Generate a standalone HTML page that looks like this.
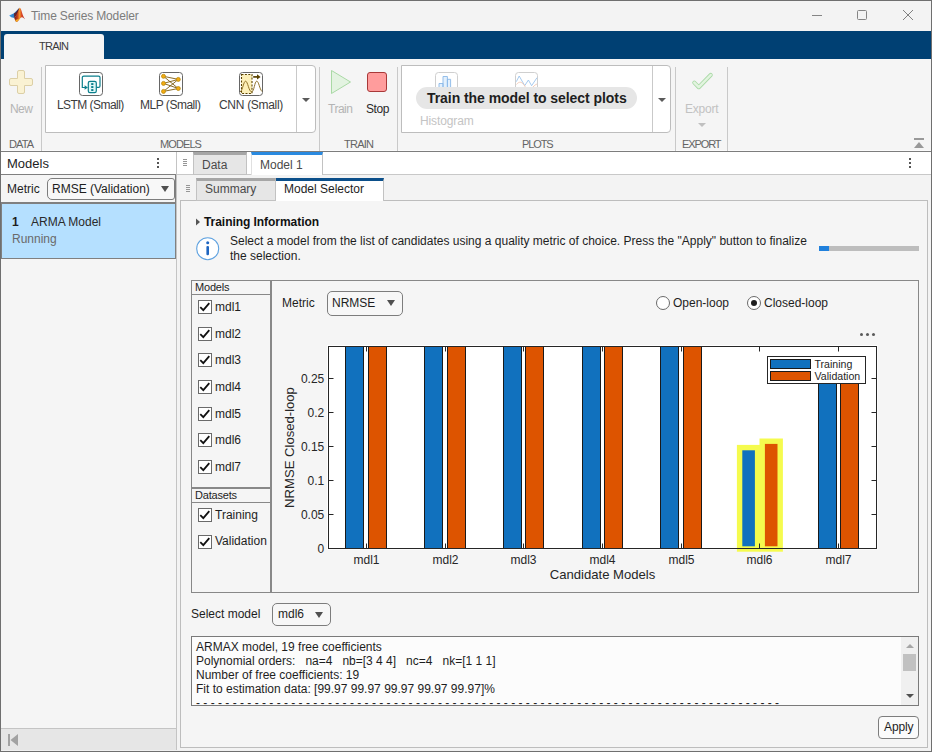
<!DOCTYPE html>
<html><head><meta charset="utf-8"><title>Time Series Modeler</title>
<style>
*{box-sizing:border-box;margin:0;padding:0}
html,body{width:932px;height:752px;overflow:hidden;background:#f0f0f0}
body{font-family:"Liberation Sans",sans-serif;font-size:12px;color:#212121;position:relative}
.a{position:absolute;white-space:nowrap}
.ui{color:#3c3c3c}
.dis{color:#b4b4b4}
#win{position:absolute;left:0;top:0;width:932px;height:752px;border:1px solid #6f6f6f;border-left-width:1px}
.sep{position:absolute;width:1px;background:#c9c9c9;top:67px;height:84px}
.sec{position:absolute;top:138px;font-size:11px;color:#646464;white-space:nowrap}
.gal{position:absolute;top:65px;height:68px;background:#fff;border:1px solid #bdbdbd;border-radius:0 4px 4px 0}
.cb{position:absolute;left:198px;width:14px;height:14px;border:1px solid #6a6a6a;background:#fff}
.cbl{position:absolute;left:215px;white-space:nowrap}
</style></head><body>
<!-- TITLE BAR -->
<div class="a" style="left:0;top:0;width:932px;height:31px;background:#f3f3f3"></div>
<svg class="a" style="left:9px;top:7px" width="17" height="16" viewBox="0 0 17 16">
 <defs><linearGradient id="lg1" x1="0" y1="0" x2="1" y2="0"><stop offset="0" stop-color="#7a1410"/><stop offset="0.3" stop-color="#c8421a"/><stop offset="0.5" stop-color="#f39a2c"/><stop offset="0.66" stop-color="#dc4c26"/><stop offset="1" stop-color="#b02420"/></linearGradient>
 <linearGradient id="lg2" x1="0" y1="0" x2="1" y2="0"><stop offset="0" stop-color="#3a9ae6"/><stop offset="1" stop-color="#1f5c9c"/></linearGradient></defs>
 <path d="M0.2 8.6 L5 6.3 L10.2 1 L8.4 6.8 L5.3 11 L2.2 10.2 Z" fill="url(#lg2)"/>
 <path d="M5 6.3 L6.8 5.4 L10.5 0.7 L9.2 6 L5.3 11 Z" fill="#6a1418" opacity="0.85"/>
 <path d="M10.5 0.7 C11.6 0.4 12.3 3 13 5.5 C13.8 8.2 14.8 10.6 16 12.2 C14.6 10.9 13.6 10.1 12.8 10.3 C11 10.7 9.6 14.7 7.4 15 C6.6 14.5 5.8 12.6 5.3 11 C7 9 9 5 10.5 0.7 Z" fill="url(#lg1)"/>
 <path d="M7.4 15 C8.6 14.4 9.6 12.6 10.6 11.4 C9.4 12 7.6 12.6 6.2 12.8 C6.5 13.7 6.9 14.5 7.4 15 Z" fill="#f5b025"/>
</svg>
<div class="a" style="left:31px;top:9px;font-size:12px;color:#7c7c7c;letter-spacing:-0.14px">Time Series Modeler</div>
<!-- window controls -->
<div class="a" style="left:812px;top:15px;width:10px;height:1px;background:#858585"></div>
<div class="a" style="left:857px;top:10px;width:10px;height:10px;border:1px solid #858585;border-radius:1.5px"></div>
<svg class="a" style="left:903px;top:10px" width="10" height="10" viewBox="0 0 10 10"><path d="M0 0 L10 10 M10 0 L0 10" stroke="#808080" stroke-width="1" fill="none"/></svg>

<!-- BLUE TAB BAND -->
<div class="a" style="left:1px;top:31px;width:930px;height:28px;background:#004073"></div>
<div class="a" style="left:4px;top:34px;width:100px;height:25px;background:#f5f5f5;border-radius:3px 3px 0 0"></div>
<div class="a ui" style="left:39px;top:40px;font-size:11px;letter-spacing:-0.75px;color:#3a3a3a">TRAIN</div>

<!-- TOOLSTRIP -->
<div class="a" style="left:1px;top:59px;width:930px;height:92px;background:#f5f5f5"></div>
<div class="a" style="left:1px;top:150px;width:930px;height:1px;background:#fbfbfb"></div>
<div class="a" style="left:1px;top:151px;width:930px;height:1px;background:#7d7d7d"></div>

<!-- New -->
<svg class="a" style="left:9px;top:70px" width="24" height="24" viewBox="0 0 24 24"><path d="M10 0.5 h4 a1.5 1.5 0 0 1 1.5 1.5 v6.5 h6.5 a1.5 1.5 0 0 1 1.5 1.5 v4 a1.5 1.5 0 0 1 -1.5 1.5 h-6.5 v6.5 a1.5 1.5 0 0 1 -1.5 1.5 h-4 a1.5 1.5 0 0 1 -1.5 -1.5 v-6.5 h-6.5 a1.5 1.5 0 0 1 -1.5 -1.5 v-4 a1.5 1.5 0 0 1 1.5 -1.5 h6.5 v-6.5 a1.5 1.5 0 0 1 1.5 -1.5 z" fill="#faf2d3" stroke="#dccfa6" stroke-width="1"/></svg>
<div class="a dis" style="left:10px;top:102px;letter-spacing:-0.6px">New</div>
<div class="sec" style="left:9px;letter-spacing:-0.85px">DATA</div>
<div class="sep" style="left:41px"></div>

<!-- Models gallery -->
<div class="gal" style="left:45px;width:271px"></div>
<div class="a" style="left:296px;top:66px;width:1px;height:66px;background:#c9c9c9"></div>
<svg class="a" style="left:302px;top:98px" width="8" height="4"><path d="M0 0 H8 L4 4 Z" fill="#5a5a5a"/></svg>
<!-- LSTM icon -->
<svg class="a" style="left:79px;top:72px" width="24" height="24" viewBox="0 0 24 24">
 <rect x="0.5" y="0.5" width="23" height="23" rx="3" fill="#fff" stroke="#666"/>
 <path d="M17.3 15.4 H19.5 A1.5 1.5 0 0 0 21 13.9 V5.6 A1.5 1.5 0 0 0 19.5 4.1 H4.8 A1.5 1.5 0 0 0 3.3 5.6 V15.5 H6" fill="none" stroke="#0b7f8c" stroke-width="1.2"/>
 <path d="M5.6 13.2 L8.9 15.5 L5.6 17.8 Z" fill="#0b7f8c"/>
 <rect x="9.3" y="9.3" width="8" height="11.4" rx="1.6" fill="#dff7f7" stroke="#0b7f8c" stroke-width="1.2"/>
 <rect x="12.2" y="11.1" width="2.2" height="1.9" fill="#0b7f8c"/><rect x="12.2" y="14.1" width="2.2" height="1.9" fill="#0b7f8c"/><rect x="12.2" y="17.1" width="2.2" height="1.9" fill="#0b7f8c"/>
</svg>
<div class="a ui" style="left:57px;top:98px;letter-spacing:-0.55px">LSTM (Small)</div>
<!-- MLP icon -->
<svg class="a" style="left:159px;top:72px" width="24" height="24" viewBox="0 0 24 24">
 <rect x="0.5" y="0.5" width="23" height="23" rx="3" fill="#fff" stroke="#666"/>
 <path d="M4.5 4.3 L19.3 7.4 M4.5 4.3 L19.3 16.5 M4.5 11.4 L19.3 7.4 M4.5 11.4 L19.3 16.5 M4.5 19.4 L19.3 7.4 M4.5 19.4 L19.3 16.5" stroke="#7a5a10" stroke-width="0.9" fill="none"/>
 <g fill="#f2ab10" stroke="#b98a10" stroke-width="0.8"><circle cx="4.5" cy="4.3" r="2"/><circle cx="4.5" cy="11.4" r="2"/><circle cx="4.5" cy="19.4" r="2"/><circle cx="19.3" cy="7.4" r="2"/><circle cx="19.3" cy="16.5" r="2"/></g>
</svg>
<div class="a ui" style="left:140px;top:98px;letter-spacing:-0.48px">MLP (Small)</div>
<!-- CNN icon -->
<svg class="a" style="left:239px;top:72px" width="24" height="24" viewBox="0 0 24 24">
 <rect x="0.5" y="0.5" width="23" height="23" rx="3" fill="#fff" stroke="#666"/>
 <rect x="2.5" y="2.5" width="10.5" height="19" fill="#fdf0b8" stroke="#5a4200" stroke-width="1.1" stroke-dasharray="2 1.4"/>
 <path d="M1 20 C4 18 4.5 9.2 6.6 9.2 C8.8 9.2 9.8 19.8 12.6 19.8 C15.2 19.8 15.6 9.2 17.7 9.2 C19.8 9.2 20.5 17 23 19.5" fill="none" stroke="#8a6a20" stroke-width="0.95"/>
 <path d="M14.2 4.9 H18.5" stroke="#5a4200" stroke-width="1.7"/><path d="M18 2.2 L21.6 4.9 L18 7.6 Z" fill="#5a4200"/>
</svg>
<div class="a ui" style="left:219px;top:98px;letter-spacing:-0.3px">CNN (Small)</div>
<div class="sec" style="left:160px;letter-spacing:-0.9px">MODELS</div>
<div class="sep" style="left:319px"></div>

<!-- Train section -->
<svg class="a" style="left:330px;top:69px" width="22" height="26" viewBox="0 0 22 26"><path d="M1.5 1.5 L20.5 13 L1.5 24.5 Z" fill="#e3f3e1" stroke="#a9d9a5" stroke-width="1"/></svg>
<div class="a dis" style="left:328px;top:102px;letter-spacing:-0.5px">Train</div>
<div class="a" style="left:367px;top:72px;width:20px;height:20px;background:#ff9c9c;border:1px solid #a83838;border-radius:3px"></div>
<div class="a ui" style="left:366px;top:102px;letter-spacing:-0.4px;color:#2a2a2a">Stop</div>
<div class="sec" style="left:344px;letter-spacing:-0.75px">TRAIN</div>
<div class="sep" style="left:397px"></div>

<!-- Plots gallery -->
<div class="gal" style="left:401px;width:270px"></div>
<div class="a" style="left:652px;top:66px;width:1px;height:66px;background:#c9c9c9"></div>
<svg class="a" style="left:658px;top:98px" width="8" height="4"><path d="M0 0 H8 L4 4 Z" fill="#5a5a5a"/></svg>
<svg class="a" style="left:435px;top:72px" width="24" height="24" viewBox="0 0 24 24">
 <rect x="0.5" y="0.5" width="22" height="23" rx="3" fill="#fff" stroke="#cfcfcf"/>
 <path d="M4 20 V11.5 H8 V20 M8 20 V4.5 H12.4 V20 M12.4 20 V7.3 H15.6 V20" fill="#e3f0fd" stroke="#8ab8e8" stroke-width="0.9"/>
</svg>
<svg class="a" style="left:515px;top:72px" width="24" height="24" viewBox="0 0 24 24">
 <rect x="0.5" y="0.5" width="22" height="23" rx="3" fill="#fff" stroke="#cfcfcf"/>
 <path d="M1.3 9.7 L4.2 4 L9.7 13.7 L13.4 8 L16.6 13.7 L22 5.7" fill="none" stroke="#9cc4ec" stroke-width="0.9"/>
 <path d="M1.5 12.5 C4 9 7.5 9.5 10 14.5 C12 18 15 18 18 15 C19.5 13.5 20.5 12.5 22 12" fill="none" stroke="#f3c8b4" stroke-width="0.9"/>
</svg>
<div class="a" style="left:416px;top:87px;width:221px;height:22px;background:#e6e6e6;border-radius:11px"></div>
<div class="a" style="left:427px;top:90px;font-size:14px;font-weight:bold;color:#1e1e1e;letter-spacing:-0.06px">Train the model to select plots</div>
<div class="a" style="left:420px;top:114px;color:#c4c4c4;letter-spacing:-0.12px">Histogram</div>
<div class="sec" style="left:522px;letter-spacing:-1.1px">PLOTS</div>
<div class="sep" style="left:675px"></div>

<!-- Export -->
<svg class="a" style="left:689px;top:71px" width="26" height="21" viewBox="0 0 26 21"><path d="M5.3 11.6 L9.8 16.2 L21.7 4.0" fill="none" stroke="#a9d9a6" stroke-width="4.1" stroke-linejoin="round" stroke-linecap="round"/><path d="M5.3 11.6 L9.8 16.2 L21.7 4.0" fill="none" stroke="#e2f4df" stroke-width="2.5" stroke-linejoin="round" stroke-linecap="round"/></svg>
<div class="a" style="left:685px;top:102px;letter-spacing:-0.2px;color:#c2c2c2">Export</div>
<svg class="a" style="left:698px;top:123px" width="8" height="4"><path d="M0 0 H8 L4 4 Z" fill="#c0c0c0"/></svg>
<div class="sec" style="left:682px;letter-spacing:-1.1px">EXPORT</div>
<div class="sep" style="left:727px"></div>
<!-- collapse -->
<svg class="a" style="left:914px;top:138px" width="10" height="10" viewBox="0 0 10 10"><rect x="0" y="0" width="10" height="2" fill="#999"/><path d="M5 4 L10 10 H0 Z" fill="#999"/></svg>

<!-- LEFT PANEL -->
<div class="a" style="left:1px;top:152px;width:175px;height:22px;background:#fff"></div>
<div class="a" style="left:1px;top:174px;width:175px;height:1px;background:#808080"></div>
<div class="a" style="left:175px;top:174px;width:1px;height:29px;background:#808080;z-index:2"></div>
<div class="a" style="left:7px;top:156px;font-size:13px;color:#1e1e1e">Models</div>
<div class="a" style="left:157px;top:158px;width:2px;height:2px;background:#555;box-shadow:0 4px 0 #555,0 8px 0 #555"></div>
<div class="a" style="left:1px;top:175px;width:175px;height:553px;background:#f5f5f5"></div>
<div class="a" style="left:176px;top:152px;width:1px;height:598px;background:#c4c4c4"></div>
<div class="a" style="left:7px;top:182px;color:#1e1e1e">Metric</div>
<div class="a" style="left:47px;top:178px;width:128px;height:22px;background:#f8f8f8;border:1px solid #7d7d7d;border-radius:5px 3px 3px 5px"></div>
<div class="a" style="left:52px;top:182px;color:#1e1e1e">RMSE (Validation)</div>
<svg class="a" style="left:161px;top:186px" width="8" height="6"><path d="M0 0 H8 L4 6 Z" fill="#505050"/></svg>
<div class="a" style="left:1px;top:202px;width:175px;height:57px;background:#b5e0ff;border-top:2px solid #808080;border-bottom:1px solid #808080;border-right:1px solid #808080;border-left:1px solid #808080"></div>
<div class="a" style="left:12px;top:215px;font-weight:bold;color:#1e1e1e">1</div>
<div class="a" style="left:31px;top:215px;color:#2a2a2a">ARMA Model</div>
<div class="a" style="left:12px;top:232px;color:#6a6a6a">Running</div>
<div class="a" style="left:1px;top:728px;width:175px;height:22px;background:#e6e6e6;border-top:1px solid #c4c4c4"></div>
<svg class="a" style="left:8px;top:734px" width="10" height="12"><path d="M0 0 H2 V12 H0 Z M10 0 V12 L2.5 6 Z" fill="#a2a2a2"/></svg>

<!-- DOC TAB BAR -->
<div class="a" style="left:177px;top:152px;width:754px;height:22px;background:#fff"></div>
<div class="a" style="left:177px;top:174px;width:754px;height:1px;background:#c8c8c8"></div>
<div class="a" style="left:183px;top:159px;width:4px;height:1px;background:#969696;box-shadow:0 2px 0 #969696,0 4px 0 #969696,0 6px 0 #969696"></div>
<div class="a" style="left:193px;top:152px;width:54px;height:23px;background:#e6e6e6;border:1px solid #c2c2c2;border-top:3px solid #a6a6a6"></div>
<div class="a" style="left:202px;top:158px;color:#4a4a4a">Data</div>
<div class="a" style="left:251px;top:152px;width:72px;height:23px;background:#fff;border-right:1px solid #c2c2c2;border-left:1px solid #e0e0e0;border-top:3px solid #2a8ae0"></div>
<div class="a" style="left:260px;top:158px;color:#4a4a4a">Model 1</div>
<div class="a" style="left:909px;top:158px;width:2px;height:2px;background:#555;box-shadow:0 4px 0 #555,0 8px 0 #555"></div>

<!-- INNER TAB BAR -->
<div class="a" style="left:177px;top:175px;width:754px;height:575px;background:#f3f3f3"></div>
<div class="a" style="left:186px;top:185px;width:4px;height:1px;background:#969696;box-shadow:0 2px 0 #969696,0 4px 0 #969696,0 6px 0 #969696"></div>
<div class="a" style="left:180px;top:200px;width:748px;height:548px;background:#f5f5f5;border:1px solid #bdbdbd"></div>
<div class="a" style="left:196px;top:178px;width:80px;height:23px;background:#e6e6e6;border:1px solid #c2c2c2;border-top:3px solid #a6a6a6"></div>
<div class="a" style="left:205px;top:182px;color:#4a4a4a">Summary</div>
<div class="a" style="left:276px;top:178px;width:108px;height:23px;background:#fff;border-right:1px solid #c2c2c2;border-top:3px solid #0b4f8a"></div>
<div class="a" style="left:284px;top:182px;color:#1e1e1e">Model Selector</div>

<!-- Training info -->
<svg class="a" style="left:196px;top:218px" width="4" height="8"><path d="M0 0.5 L4 4 L0 7.5 Z" fill="#555"/></svg>
<div class="a" style="left:204px;top:215px;font-weight:bold;color:#111;letter-spacing:-0.05px">Training Information</div>
<svg class="a" style="left:196px;top:237px" width="24" height="24" viewBox="0 0 24 24"><circle cx="11.7" cy="11.7" r="11" fill="#fff" stroke="#5fa2e0" stroke-width="1.1"/><circle cx="11.7" cy="5.8" r="1.5" fill="#1f66c1"/><rect x="10.4" y="8.9" width="2.6" height="9.4" rx="1.2" fill="#1f66c1"/></svg>
<div class="a" style="left:230px;top:234px;line-height:15px;color:#1e1e1e;white-space:normal;width:600px">Select a model from the list of candidates using a quality metric of choice. Press the "Apply" button to finalize<br>the selection.</div>
<div class="a" style="left:819px;top:246px;width:100px;height:5px;background:#bdbdbd"></div>
<div class="a" style="left:819px;top:246px;width:10px;height:5px;background:#2080dc"></div>

<!-- MAIN PANEL -->
<div class="a" style="left:191px;top:280px;width:728px;height:313px;border:1px solid #888"></div>
<div class="a" style="left:191px;top:280px;width:81px;height:313px;border:1px solid #888;border-right:2px solid #888"></div>
<div class="a" style="left:192px;top:294px;width:79px;height:1px;background:#888"></div>
<div class="a" style="left:195px;top:281px;font-size:11px;letter-spacing:-0.2px;color:#1e1e1e">Models</div>
<div class="a" style="left:192px;top:487px;width:79px;height:2px;background:#888"></div>
<div class="a" style="left:192px;top:502px;width:79px;height:1px;background:#888"></div>
<div class="a" style="left:195px;top:489px;font-size:11px;letter-spacing:-0.2px;color:#1e1e1e">Datasets</div>
<div id="cbs"><div class="cb" style="top:300px"><svg width="12" height="12" viewBox="0 0 12 12" style="display:block"><path d="M1.3 6.2 L4.3 9.2 L10.3 2.2" fill="none" stroke="#111" stroke-width="1.8"/></svg></div><div class="cbl" style="top:300px;color:#1e1e1e">mdl1</div>
<div class="cb" style="top:327px"><svg width="12" height="12" viewBox="0 0 12 12" style="display:block"><path d="M1.3 6.2 L4.3 9.2 L10.3 2.2" fill="none" stroke="#111" stroke-width="1.8"/></svg></div><div class="cbl" style="top:327px;color:#1e1e1e">mdl2</div>
<div class="cb" style="top:353px"><svg width="12" height="12" viewBox="0 0 12 12" style="display:block"><path d="M1.3 6.2 L4.3 9.2 L10.3 2.2" fill="none" stroke="#111" stroke-width="1.8"/></svg></div><div class="cbl" style="top:353px;color:#1e1e1e">mdl3</div>
<div class="cb" style="top:380px"><svg width="12" height="12" viewBox="0 0 12 12" style="display:block"><path d="M1.3 6.2 L4.3 9.2 L10.3 2.2" fill="none" stroke="#111" stroke-width="1.8"/></svg></div><div class="cbl" style="top:380px;color:#1e1e1e">mdl4</div>
<div class="cb" style="top:407px"><svg width="12" height="12" viewBox="0 0 12 12" style="display:block"><path d="M1.3 6.2 L4.3 9.2 L10.3 2.2" fill="none" stroke="#111" stroke-width="1.8"/></svg></div><div class="cbl" style="top:407px;color:#1e1e1e">mdl5</div>
<div class="cb" style="top:433px"><svg width="12" height="12" viewBox="0 0 12 12" style="display:block"><path d="M1.3 6.2 L4.3 9.2 L10.3 2.2" fill="none" stroke="#111" stroke-width="1.8"/></svg></div><div class="cbl" style="top:433px;color:#1e1e1e">mdl6</div>
<div class="cb" style="top:460px"><svg width="12" height="12" viewBox="0 0 12 12" style="display:block"><path d="M1.3 6.2 L4.3 9.2 L10.3 2.2" fill="none" stroke="#111" stroke-width="1.8"/></svg></div><div class="cbl" style="top:460px;color:#1e1e1e">mdl7</div>
<div class="cb" style="top:508px"><svg width="12" height="12" viewBox="0 0 12 12" style="display:block"><path d="M1.3 6.2 L4.3 9.2 L10.3 2.2" fill="none" stroke="#111" stroke-width="1.8"/></svg></div><div class="cbl" style="top:508px;color:#1e1e1e">Training</div>
<div class="cb" style="top:535px"><svg width="12" height="12" viewBox="0 0 12 12" style="display:block"><path d="M1.3 6.2 L4.3 9.2 L10.3 2.2" fill="none" stroke="#111" stroke-width="1.8"/></svg></div><div class="cbl" style="top:534px;color:#1e1e1e">Validation</div></div><!--cbs-->

<div class="a" style="left:282px;top:296px;color:#1e1e1e">Metric</div>
<div class="a" style="left:327px;top:291px;width:76px;height:25px;background:#f7f7f7;border:1px solid #7d7d7d;border-radius:5px"></div>
<div class="a" style="left:332px;top:296px;color:#1e1e1e">NRMSE</div>
<svg class="a" style="left:387px;top:300px" width="8" height="6"><path d="M0 0 H8 L4 6 Z" fill="#505050"/></svg>

<div class="a" style="left:656px;top:296px;width:14px;height:14px;border:1px solid #6a6a6a;border-radius:50%;background:#fff"></div>
<div class="a" style="left:673px;top:296px;color:#1e1e1e">Open-loop</div>
<div class="a" style="left:747px;top:296px;width:14px;height:14px;border:1px solid #6a6a6a;border-radius:50%;background:#fff"></div>
<div class="a" style="left:751px;top:300px;width:6px;height:6px;border-radius:50%;background:#1e1e1e"></div>
<div class="a" style="left:764px;top:296px;color:#1e1e1e">Closed-loop</div>

<div class="a" style="left:860px;top:333px;width:3px;height:3px;border-radius:50%;background:#5a5a5a;box-shadow:6px 0 0 #5a5a5a,12px 0 0 #5a5a5a"></div>

<!-- CHART -->
<svg class="a" style="left:272px;top:320px" width="646" height="272" viewBox="272 320 646 272" font-family="Liberation Sans, sans-serif" id="chart">
<rect x="327.0" y="345.0" width="550.6" height="204.6" fill="#fff"/>
<rect x="345.5" y="346.5" width="18.0" height="202.0" fill="#1171be" stroke="#1a1a1a" stroke-width="1"/>
<rect x="368.5" y="346.5" width="18.0" height="202.0" fill="#dd5400" stroke="#1a1a1a" stroke-width="1"/>
<rect x="424.5" y="346.5" width="18.0" height="202.0" fill="#1171be" stroke="#1a1a1a" stroke-width="1"/>
<rect x="447.5" y="346.5" width="18.0" height="202.0" fill="#dd5400" stroke="#1a1a1a" stroke-width="1"/>
<rect x="503.5" y="346.5" width="18.0" height="202.0" fill="#1171be" stroke="#1a1a1a" stroke-width="1"/>
<rect x="525.5" y="346.5" width="18.0" height="202.0" fill="#dd5400" stroke="#1a1a1a" stroke-width="1"/>
<rect x="582.5" y="346.5" width="18.0" height="202.0" fill="#1171be" stroke="#1a1a1a" stroke-width="1"/>
<rect x="604.5" y="346.5" width="18.0" height="202.0" fill="#dd5400" stroke="#1a1a1a" stroke-width="1"/>
<rect x="660.5" y="346.5" width="18.0" height="202.0" fill="#1171be" stroke="#1a1a1a" stroke-width="1"/>
<rect x="683.5" y="346.5" width="18.0" height="202.0" fill="#dd5400" stroke="#1a1a1a" stroke-width="1"/>
<rect x="818.5" y="370.5" width="18.0" height="178.0" fill="#1171be" stroke="#1a1a1a" stroke-width="1"/>
<rect x="840.5" y="370.5" width="18.0" height="178.0" fill="#dd5400" stroke="#1a1a1a" stroke-width="1"/>
<rect x="739.6" y="447.6" width="18.0" height="101.4" fill="#1171be" stroke="#f5fb4e" stroke-width="5.4"/>
<rect x="762.2" y="441.2" width="18.0" height="107.8" fill="#dd5400" stroke="#f5fb4e" stroke-width="5.4"/>
<rect x="328.5" y="346.5" width="548.0" height="202.0" fill="none" stroke="#262626" stroke-width="1"/>
<path d="M366.5 548.5 v-5 M366.5 346.5 v5 M445.5 548.5 v-5 M445.5 346.5 v5 M523.5 548.5 v-5 M523.5 346.5 v5 M602.5 548.5 v-5 M602.5 346.5 v5 M681.5 548.5 v-5 M681.5 346.5 v5 M759.5 548.5 v-5 M759.5 346.5 v5 M838.5 548.5 v-5 M838.5 346.5 v5 M328.5 514.5 h5 M876.5 514.5 h-5 M328.5 480.5 h5 M876.5 480.5 h-5 M328.5 446.5 h5 M876.5 446.5 h-5 M328.5 412.5 h5 M876.5 412.5 h-5 M328.5 378.5 h5 M876.5 378.5 h-5" stroke="#262626" stroke-width="1" fill="none"/>
<text x="366.5" y="564" font-size="12" fill="#262626" text-anchor="middle">mdl1</text>
<text x="445.5" y="564" font-size="12" fill="#262626" text-anchor="middle">mdl2</text>
<text x="523.5" y="564" font-size="12" fill="#262626" text-anchor="middle">mdl3</text>
<text x="602.5" y="564" font-size="12" fill="#262626" text-anchor="middle">mdl4</text>
<text x="681.5" y="564" font-size="12" fill="#262626" text-anchor="middle">mdl5</text>
<text x="759.5" y="564" font-size="12" fill="#262626" text-anchor="middle">mdl6</text>
<text x="838.5" y="564" font-size="12" fill="#262626" text-anchor="middle">mdl7</text>
<text x="324.3" y="552.8" font-size="12" fill="#262626" text-anchor="end">0</text>
<text x="324.3" y="518.8" font-size="12" fill="#262626" text-anchor="end">0.05</text>
<text x="324.3" y="484.8" font-size="12" fill="#262626" text-anchor="end">0.1</text>
<text x="324.3" y="450.8" font-size="12" fill="#262626" text-anchor="end">0.15</text>
<text x="324.3" y="416.8" font-size="12" fill="#262626" text-anchor="end">0.2</text>
<text x="324.3" y="382.8" font-size="12" fill="#262626" text-anchor="end">0.25</text>
<text x="602.5" y="579" font-size="13.1" fill="#262626" text-anchor="middle">Candidate Models</text>
<text transform="translate(294,447.5) rotate(-90)" font-size="13.1" fill="#262626" text-anchor="middle">NRMSE Closed-loop</text>
<rect x="767.5" y="356.5" width="98" height="27" fill="#fff" stroke="#262626" stroke-width="1"/>
<rect x="770.5" y="359.5" width="40" height="9" fill="#1171be" stroke="#1a1a1a" stroke-width="1"/>
<rect x="770.5" y="371.5" width="40" height="9" fill="#dd5400" stroke="#1a1a1a" stroke-width="1"/>
<text x="814.5" y="368" font-size="10.6" fill="#262626">Training</text>
<text x="814.5" y="380" font-size="10.6" fill="#262626">Validation</text>
</svg>

<!-- Select model -->
<div class="a" style="left:191px;top:607px;color:#1e1e1e">Select model</div>
<div class="a" style="left:272px;top:603px;width:59px;height:23px;background:#f7f7f7;border:1px solid #7d7d7d;border-radius:5px"></div>
<div class="a" style="left:278px;top:607px;color:#1e1e1e">mdl6</div>
<svg class="a" style="left:315px;top:612px" width="8" height="6"><path d="M0 0 H8 L4 6 Z" fill="#505050"/></svg>

<!-- Text area -->
<div class="a" style="left:191px;top:636px;width:728px;height:70px;background:#fcfcfc;border:1px solid #7a7a7a;overflow:hidden">
 <div style="position:absolute;left:4px;top:3px;line-height:14px;color:#1e1e1e;white-space:pre">ARMAX model, 19 free coefficients
Polynomial orders:   na=4   nb=[3 4 4]   nc=4   nk=[1 1 1]
Number of free coefficients: 19
Fit to estimation data<span>:</span> [99.97 99.97 99.97 99.97 99.97]%
- - - - - - - - - - - - - - - - - - - - - - - - - - - - - - - - - - - - - - - - - - - - - - - - - - - - - - - - - - - - - - - - - - - - - - - - - - - - - - - -</div>
 <div style="position:absolute;left:709px;top:0;width:17px;height:68px;background:#f0f0f0"></div>
 <svg style="position:absolute;left:714px;top:7px" width="8" height="4"><path d="M0 4 H8 L4 0 Z" fill="#a6a6a6"/></svg>
 <div style="position:absolute;left:711px;top:17px;width:13px;height:17px;background:#c1c1c1"></div>
 <svg style="position:absolute;left:714px;top:57px" width="8" height="4"><path d="M0 0 H8 L4 4 Z" fill="#505050"/></svg>
</div>
<div class="a" style="left:878px;top:716px;width:41px;height:23px;background:#fbfbfb;border:1px solid #7d7d7d;border-radius:4px"></div>
<div class="a" style="left:884px;top:720px;letter-spacing:-0.1px;color:#1e1e1e">Apply</div>

<div id="win"></div>
</body></html>
